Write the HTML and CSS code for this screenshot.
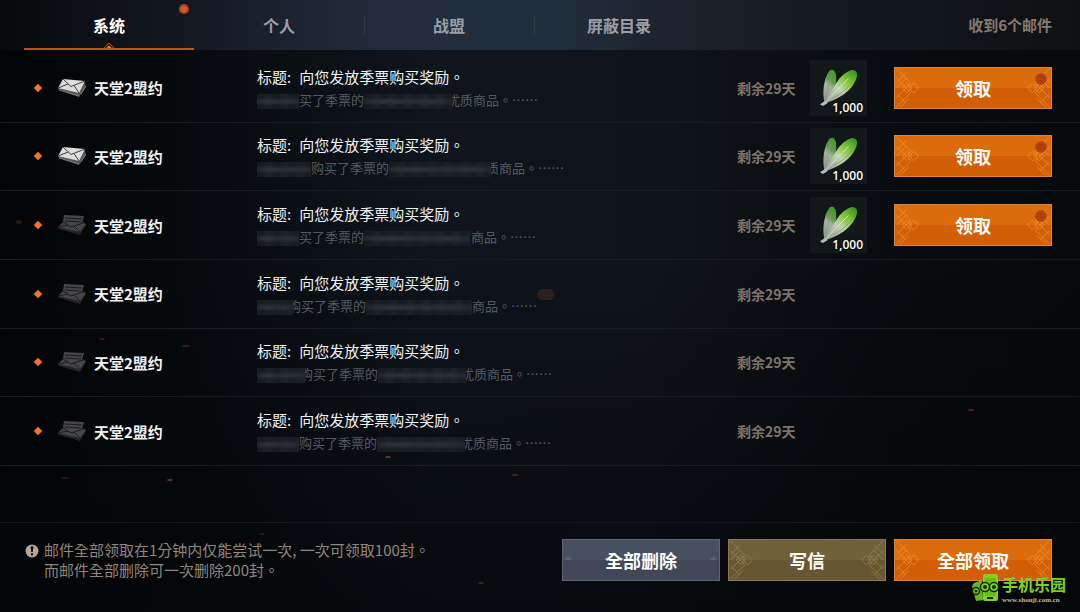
FILE: index.html
```
<!DOCTYPE html>
<html lang="zh-TW">
<head>
  <meta charset="UTF-8">
  <meta name="viewport" content="width=device-width, initial-scale=1">
  <title>邮件</title>
  <link rel="stylesheet" href="styles.css">
</head>
<body>

  <!-- shared icons -->
  <svg class="defs" aria-hidden="true">
    <defs>
      <linearGradient id="leaf-a" x1="0.6" y1="0" x2="0.3" y2="1">
        <stop offset="0" stop-color="#3f9a2c"/>
        <stop offset="0.3" stop-color="#5f9a4c"/>
        <stop offset="0.5" stop-color="#a3b2a0"/>
        <stop offset="1" stop-color="#8e9a96"/>
      </linearGradient>
      <linearGradient id="leaf-b" x1="0.9" y1="0" x2="0.2" y2="1">
        <stop offset="0" stop-color="#34901c"/>
        <stop offset="0.35" stop-color="#86c93e"/>
        <stop offset="0.6" stop-color="#c0d4ae"/>
        <stop offset="1" stop-color="#98a3a0"/>
      </linearGradient>
    </defs>
    <symbol id="mail-new" viewBox="0 0 30 20">
      <path d="M1 10 L2 12 L22 19 L29 9 L28 5 Z" fill="#55575a"/>
      <path d="M2 12 L22 18 M24 16 L29 8" stroke="#8a8c8e" stroke-width="0.7" fill="none"/>
      <path d="M6 1 L28 3 L22 15 L1 10 Z" fill="#dcdcda"/>
      <path d="M6 1 L14 8.500 L28 3 M1 10 L11 6 M22 15 L17 7.500" stroke="#3c3d3f" stroke-width="1" fill="none"/>
    </symbol>
    <symbol id="mail-open" viewBox="0 0 30 22">
      <path d="M1 13 L2 15 L23 21 L29 11 L27 8 Z" fill="#242426"/>
      <path d="M7 1 L27 2 L25 9 L29 10 L23 18 L1 13 L6 8 Z" fill="#454547"/>
      <path d="M8 4 L25 5 M8 7 L24 8 M6 8 L14 13 L26 9 M1 13 L11 11 M23 18 L17 12" stroke="#1b1b1d" stroke-width="1" fill="none"/>
    </symbol>
    <symbol id="leaves" viewBox="0 0 42 42">
      <path d="M6 37 C3 27 5 10 11 3 C14 0 18 3 18 9 C19 19 15 29 6 37 Z" fill="url(#leaf-a)"/>
      <path d="M7 37 C9 29 14 23 18 16 C22 9 29 3 35 2 C41 2 41 8 38 14 C33 25 20 33 7 37 Z" fill="url(#leaf-b)"/>
      <path d="M7 36 C15 27 22 20 31 11" stroke="#dbe8bd" stroke-width="1" fill="none"/>
      <path d="M15 31 C24 27 32 20 37 11" stroke="#6f9060" stroke-width="0.6" fill="none"/>
      <path d="M7 34 C8 25 10 16 13 9" stroke="#7fa070" stroke-width="0.7" fill="none"/>
      <path d="M1 38 L7 34 L9 37 L4 40 Z" fill="#b4bbba"/>
    </symbol>
    <symbol id="lattice" viewBox="0 0 26 42">
      <path d="M1 1 L16 16 L11 21 L1 11 M1 21 L11 11 M1 15 L11 5 M14 21 L19 16 L24 21 L19 26 Z M7 21 L12 16 L17 21 L12 26 Z M1 31 L11 21 L16 26 L1 41 M1 27 L10 36 M5 41 L14 32"/>
    </symbol>
    <symbol id="notch" viewBox="0 0 26 42">
      <path d="M1 21 L5 17 L9 21 Z" fill="#5b6472"/>
    </symbol>
    <symbol id="seal" viewBox="0 0 12 12">
      <circle cx="6" cy="6" r="5.200" fill="#bd480d" stroke="#9c3d0b"/>
      <circle cx="6" cy="6" r="2.800" fill="none" stroke="#98390c"/>
      <path d="M6 4 V8" stroke="#98390c"/>
    </symbol>
  </svg>

  <header class="topbar">
    <nav class="tabs">
      <a class="tab active" href="#system">系统<span class="dot"></span>
        <svg class="marker" viewBox="0 0 12 6" aria-hidden="true"><path d="M1 6 L6 1 L11 6" fill="#3a1607" stroke="#b9501c"/><path d="M3.500 6 L6 3.500 L8.500 6 Z" fill="#ff7a35"/></svg>
      </a>
      <a class="tab" href="#personal">个人</a>
      <a class="tab" href="#alliance">战盟</a>
      <a class="tab" href="#blocked">屏蔽目录</a>
    </nav>
    <p class="count">收到6个邮件</p>
  </header>

  <main class="mails">
    <article class="mail">
      <span class="diamond"></span>
      <svg class="envelope" aria-hidden="true"><use href="#mail-new"/></svg>
      <strong class="sender">天堂2盟约</strong>
      <div class="text">
        <h2><span class="label">标题:</span>向您发放季票购买奖励。</h2>
        <p><span class="mosaic short"></span>买了季票的<span class="mosaic wide cut"></span>优质商品。……</p>
      </div>
      <span class="days">剩余29天</span>
      <div class="item"><svg aria-hidden="true"><use href="#leaves"/></svg><span>1,000</span></div>
      <button class="btn orange" type="button"><svg class="lattice" aria-hidden="true"><use href="#lattice"/></svg>领取<svg class="lattice flip" aria-hidden="true"><use href="#lattice"/></svg><svg class="seal" aria-hidden="true"><use href="#seal"/></svg></button>
    </article>

    <article class="mail">
      <span class="diamond"></span>
      <svg class="envelope" aria-hidden="true"><use href="#mail-new"/></svg>
      <strong class="sender">天堂2盟约</strong>
      <div class="text">
        <h2><span class="label">标题:</span>向您发放季票购买奖励。</h2>
        <p><span class="mosaic medium"></span>购买了季票的<span class="mosaic wider cut"></span>质商品。……</p>
      </div>
      <span class="days">剩余29天</span>
      <div class="item"><svg aria-hidden="true"><use href="#leaves"/></svg><span>1,000</span></div>
      <button class="btn orange" type="button"><svg class="lattice" aria-hidden="true"><use href="#lattice"/></svg>领取<svg class="lattice flip" aria-hidden="true"><use href="#lattice"/></svg><svg class="seal" aria-hidden="true"><use href="#seal"/></svg></button>
    </article>

    <article class="mail">
      <span class="diamond"></span>
      <svg class="envelope" aria-hidden="true"><use href="#mail-open"/></svg>
      <strong class="sender">天堂2盟约</strong>
      <div class="text">
        <h2><span class="label">标题:</span>向您发放季票购买奖励。</h2>
        <p><span class="mosaic short"></span>买了季票的<span class="mosaic widest deep"></span>质商品。……</p>
      </div>
      <span class="days">剩余29天</span>
      <div class="item"><svg aria-hidden="true"><use href="#leaves"/></svg><span>1,000</span></div>
      <button class="btn orange" type="button"><svg class="lattice" aria-hidden="true"><use href="#lattice"/></svg>领取<svg class="lattice flip" aria-hidden="true"><use href="#lattice"/></svg><svg class="seal" aria-hidden="true"><use href="#seal"/></svg></button>
    </article>

    <article class="mail">
      <span class="diamond"></span>
      <svg class="envelope" aria-hidden="true"><use href="#mail-open"/></svg>
      <strong class="sender">天堂2盟约</strong>
      <div class="text">
        <h2><span class="label">标题:</span>向您发放季票购买奖励。</h2>
        <p><span class="mosaic tiny cut"></span>购买了季票的<span class="mosaic widest"></span>商品。……</p>
      </div>
      <span class="days">剩余29天</span>
    </article>

    <article class="mail">
      <span class="diamond"></span>
      <svg class="envelope" aria-hidden="true"><use href="#mail-open"/></svg>
      <strong class="sender">天堂2盟约</strong>
      <div class="text">
        <h2><span class="label">标题:</span>向您发放季票购买奖励。</h2>
        <p><span class="mosaic short-plus cut"></span>购买了季票的<span class="mosaic wide cut"></span>优质商品。……</p>
      </div>
      <span class="days">剩余29天</span>
    </article>

    <article class="mail">
      <span class="diamond"></span>
      <svg class="envelope" aria-hidden="true"><use href="#mail-open"/></svg>
      <strong class="sender">天堂2盟约</strong>
      <div class="text">
        <h2><span class="label">标题:</span>向您发放季票购买奖励。</h2>
        <p><span class="mosaic short"></span>购买了季票的<span class="mosaic wide cut"></span>优质商品。……</p>
      </div>
      <span class="days">剩余29天</span>
    </article>
  </main>

  <footer class="bottombar">
    <div class="notice">
      <svg viewBox="0 0 14 14" aria-hidden="true"><circle cx="7" cy="7" r="6.500" fill="#b5a699"/><path d="M5.500 2.500 H8.500 L7.700 8 H6.300 Z M6 9.300 H8 V11.300 H6 Z" fill="#0a0908"/></svg>
      <p>邮件全部领取在1分钟内仅能尝试一次, 一次可领取100封。<br>而邮件全部删除可一次删除200封。</p>
    </div>
    <div class="actions">
      <button class="btn slate" type="button"><svg class="notch" aria-hidden="true"><use href="#notch"/></svg>全部删除<svg class="notch flip" aria-hidden="true"><use href="#notch"/></svg></button>
      <button class="btn gold" type="button"><svg class="lattice" aria-hidden="true"><use href="#lattice"/></svg>写信<svg class="lattice flip" aria-hidden="true"><use href="#lattice"/></svg></button>
      <button class="btn orange" type="button"><svg class="lattice" aria-hidden="true"><use href="#lattice"/></svg>全部领取<svg class="lattice flip" aria-hidden="true"><use href="#lattice"/></svg></button>
    </div>
  </footer>

  <!-- drifting embers -->
  <svg class="embers" viewBox="0 0 1080 612" preserveAspectRatio="none" aria-hidden="true">
    <g fill="#8c3c1c">
      <rect x="537" y="289" width="17" height="11" rx="5" opacity="0.25"/>
      <ellipse cx="19" cy="222" rx="3" ry="2" opacity="0.3"/>
      <ellipse cx="102" cy="339" rx="3" ry="1" opacity="0.4"/>
      <ellipse cx="186" cy="346" rx="4" ry="1" opacity="0.4"/>
      <ellipse cx="388" cy="457" rx="3" ry="1" opacity="0.8"/>
      <ellipse cx="170" cy="480" rx="3" ry="1" opacity="0.8"/>
      <ellipse cx="65" cy="478" rx="4" ry="1" opacity="0.3"/>
      <ellipse cx="515" cy="475" rx="3" ry="1" opacity="0.5"/>
      <ellipse cx="262" cy="534" rx="3" ry="1" opacity="0.3"/>
      <ellipse cx="481" cy="583" rx="3" ry="1" opacity="0.5"/>
      <ellipse cx="971" cy="410" rx="3" ry="1" opacity="0.6"/>
    </g>
  </svg>

  <div class="watermark">
    <svg viewBox="0 0 28 28" aria-hidden="true">
      <path d="M1 12 L3 9 L11 6 L12 26 L5 27 Z" fill="#66b81a"/>
      <rect x="12" y="0" width="15" height="27" rx="2" fill="#7dd321"/>
      <rect x="14" y="4" width="11" height="18" fill="#69b91b"/>
      <g fill="#7dd321" stroke="#16290a" stroke-width="1.500">
        <circle cx="5" cy="17" r="3.500"/>
        <circle cx="14" cy="13" r="4.500"/>
        <circle cx="23" cy="13" r="4.500"/>
      </g>
      <g fill="#16290a"><circle cx="5" cy="17" r="1.500"/><circle cx="14" cy="13" r="2"/><circle cx="23" cy="13" r="2"/><rect x="16" y="23" width="6" height="2"/></g>
    </svg>
    <div><b>手机乐园</b><small>www.shouji.com.cn</small></div>
  </div>

</body>
</html>
```
FILE: styles.css
```
* {
  box-sizing: border-box;
}
body {
  margin: 0;
  min-height: 100vh;
  display: flex;
  flex-direction: column;
  position: relative;
  font-family: "Noto Sans CJK TC", "Noto Sans CJK SC", sans-serif;
  font-size: 15px;
  color: #f2f2f2;
  background:
    linear-gradient(to bottom, transparent 40%, rgba(3,4,6,0.65)),
    linear-gradient(to right, #030405 0%, #06090c 15%, #0e151d 40%, #0f141b 60%, #090c10 80%, #07090b 100%);
}
h2, p {
  margin: 0;
}
.defs {
  position: absolute;
  width: 0;
  height: 0;
}

/* top bar */
.topbar {
  display: flex;
  justify-content: space-between;
  height: 50px;
  padding: 0 28px 0 24px;
  background: linear-gradient(to right, #07090b 0%, #151b24 20%, #222e3d 36%, #202d3a 52%, #1d222c 62%, #131920 78%, #0e1113 100%);
}
.tabs {
  display: flex;
}
.tab {
  position: relative;
  width: 170px;
  line-height: 51px;
  text-align: center;
  font-size: 16px;
  font-weight: bold;
  color: #9a9fa7;
  text-decoration: none;
}
.tab + .tab + .tab {
  background: linear-gradient(#303b47, #303b47) left center / 1px 20px no-repeat;
}
.tab.active {
  color: #fff;
  border-bottom: 2px solid #b6561f;
}
.dot {
  position: absolute;
  top: 4px;
  right: 5px;
  width: 10px;
  height: 10px;
  border-radius: 50%;
  background: #d75a1a;
  border: 2px solid #a9481a;
}
.marker {
  position: absolute;
  left: 50%;
  bottom: 0;
  width: 12px;
  height: 6px;
  margin-left: -6px;
}
.count {
  line-height: 50px;
  font-weight: bold;
  color: #857a71;
}

/* mail list */
.mails {
  flex: 1;
  display: grid;
  grid-template-rows: repeat(6, 11fr) 9fr;
  padding-top: 4px;
}
.mail {
  display: grid;
  grid-template-columns: 8px 28px 152px 1fr 73px 84px 158px;
  align-items: center;
  padding: 0 28px 0 34px;
  border-bottom: 1px solid #171c22;
}
.diamond {
  width: 6px;
  height: 6px;
  margin-left: 1px;
  background: #ef7428;
  transform: rotate(45deg);
}
.envelope {
  width: 30px;
  height: 22px;
  margin-left: 15px;
}
.sender {
  margin-left: 24px;
}
.text {
  padding-left: 35px;
}
.text h2 {
  font-size: 15px;
  font-weight: normal;
  line-height: 24px;
}
.label {
  margin-right: 8px;
}
.text p {
  font-size: 13px;
  line-height: 22px;
  color: #545a61;
  white-space: nowrap;
}
.mosaic {
  position: relative;
  z-index: 1;
  display: inline-block;
  height: 15px;
  vertical-align: middle;
  background:
    radial-gradient(ellipse at 25% 50%, #30353b, transparent 40%),
    radial-gradient(ellipse at 75% 50%, #2c3137, transparent 45%),
    repeating-linear-gradient(to right, #171c22 0 8px, #1b2026 8px 16px);
}
.mosaic.tiny { width: 36px; }
.mosaic.short { width: 42px; }
.mosaic.short-plus { width: 48px; }
.mosaic.medium { width: 54px; }
.mosaic.wide { width: 88px; }
.mosaic.wider { width: 102px; }
.mosaic.widest { width: 106px; }
.mosaic.cut { margin-right: -5px; }
.mosaic.deep { margin-right: -12px; }
.days {
  font-size: 14px;
  font-weight: bold;
  color: #7f7368;
  white-space: nowrap;
}
.item {
  position: relative;
  width: 57px;
  height: 56px;
  background: #12171a;
}
.item svg {
  display: block;
  width: 40px;
  height: 40px;
  margin: 0 auto;
  padding-top: 8px;
  box-sizing: content-box;
}
.item span {
  position: absolute;
  right: 4px;
  bottom: 0;
  font: 600 12px/17px "Open Sans", sans-serif;
  color: #fff;
  text-shadow: 0 0 2px #000;
}

/* buttons */
.btn {
  position: relative;
  display: flex;
  align-items: center;
  justify-content: space-between;
  width: 158px;
  height: 42px;
  padding: 0;
  font-family: inherit;
  font-size: 18px;
  font-weight: bold;
  color: #fff;
  border: 1px solid;
  cursor: pointer;
}
.btn.orange {
  background: linear-gradient(#dc6c0b 0 50%, #d25f07 50%);
  border-color: #dc8540;
}
.btn.gold {
  background: linear-gradient(#71613b 0 50%, #675631 50%);
  border-color: #88795a;
}
.btn.slate {
  background: linear-gradient(#46505e 0 50%, #424757 50%);
  border-color: #5d6571;
}
.lattice, .notch {
  width: 26px;
  height: 40px;
}
.lattice {
  fill: none;
  stroke: #f3973c;
  stroke-width: 1;
  opacity: 0.7;
}
.gold .lattice {
  stroke: #a28c50;
}
.flip {
  transform: scaleX(-1);
}
.seal {
  position: absolute;
  top: 5px;
  right: 4px;
  width: 12px;
  height: 12px;
}

/* bottom bar */
.bottombar {
  display: flex;
  justify-content: space-between;
  height: 90px;
  padding: 16px 28px 0 25px;
  border-top: 1px solid #14181c;
}
.notice {
  display: flex;
  gap: 5px;
  line-height: 20px;
  color: #91867c;
}
.notice svg {
  width: 14px;
  height: 14px;
  margin-top: 5px;
}
.notice p {
  padding-top: 1px;
}
.actions {
  display: flex;
  gap: 8px;
}

/* overlays */
.embers {
  position: absolute;
  inset: 0;
  width: 100%;
  height: 100%;
  pointer-events: none;
}
.watermark {
  position: absolute;
  right: 14px;
  bottom: 8px;
  display: flex;
  align-items: center;
  gap: 3px;
}
.watermark svg {
  width: 28px;
  height: 28px;
}
.watermark b {
  display: block;
  font-size: 16px;
  line-height: 24px;
  color: #7dd321;
}
.watermark small {
  display: block;
  font: bold 7px/8px "Liberation Serif", serif;
  color: #b9bcb6;
}
```
